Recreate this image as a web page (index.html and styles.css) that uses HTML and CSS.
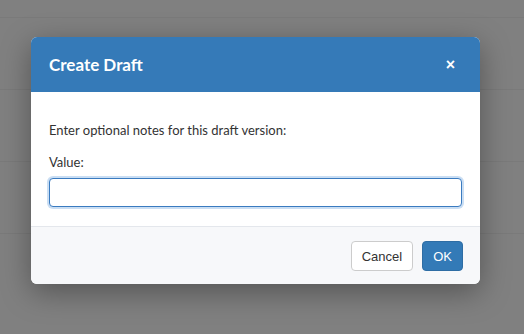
FILE: index.html
```html
<!DOCTYPE html>
<html lang="en">

<head>
    <meta charset="UTF-8">
    <meta name="viewport" content="width=device-width, initial-scale=1.0">
    <title>Create Draft</title>
    <link rel="stylesheet" href="styles.css">
</head>

<body>

    <!-- Page rows dimmed behind the overlay -->
    <div class="backdrop">
        <div class="row"></div>
        <div class="row"></div>
        <div class="row"></div>
        <div class="row"></div>
    </div>

    <!-- Create Draft dialog -->
    <div class="modal">
        <div class="modal-header">
            <h2>Create Draft</h2>
            <button class="close" type="button">&times;</button>
        </div>
        <div class="modal-body">
            <p>Enter optional notes for this draft version:</p>
            <label for="value">Value:</label>
            <input type="text" id="value" name="value">
        </div>
        <div class="modal-footer">
            <button class="btn btn-default" type="button">Cancel</button>
            <button class="btn btn-primary" type="button">OK</button>
        </div>
    </div>

</body>

</html>
```

FILE: styles.css
```css
/* General Styles */
html,
body {
    height: 100%;
    margin: 0;
    overflow: hidden;
}

body {
    position: relative;
    background-color: #808080;
    font-family: Lato, "Open Sans", sans-serif;
}

.backdrop {
    position: absolute;
    inset: 0;
    padding-top: 17px;
}

.row {
    height: 71px;
    border-top: 1px solid #7a7a7a;
}

.modal {
    position: absolute;
    top: 37px;
    left: 31px;
    width: 449px;
    background: #ffffff;
    border-radius: 6px;
    overflow: hidden;
    box-shadow: 0 8px 30px rgba(0, 0, 0, 0.35);
}

.modal-header {
    height: 55px;
    padding: 0 25px 0 18px;
    display: flex;
    justify-content: space-between;
    align-items: center;
    background-color: #357ab8;
}

h2 {
    margin: 0;
    font-size: 17px;
    font-weight: 700;
    color: #ffffff;
}

.close {
    padding: 0;
    border: none;
    background: none;
    color: #ffffff;
    font-family: "Liberation Sans", Arial, sans-serif;
    font-size: 16px;
    font-weight: 700;
    line-height: 1;
    cursor: pointer;
}

.modal-body {
    padding: 29px 18px 19px;
}

p {
    margin: 0 0 14px;
    font-size: 13px;
    line-height: 18px;
    color: #333;
}

label {
    display: block;
    margin-bottom: 7px;
    font-size: 13px;
    line-height: 18px;
    color: #333;
}

input {
    display: block;
    box-sizing: border-box;
    width: 100%;
    height: 29px;
    padding: 4px 8px;
    font-size: 13px;
    border: 1px solid #3a7bc0;
    border-radius: 4px;
    outline: none;
    box-shadow: 0 0 0 2px rgba(102, 160, 220, 0.35);
}

.modal-footer {
    display: flex;
    justify-content: flex-end;
    gap: 9px;
    padding: 14px 17px 13px;
    border-top: 1px solid #e4e7ec;
    background-color: #f7f8fa;
}

.btn {
    box-sizing: border-box;
    height: 30px;
    padding: 0 10px;
    font-family: "Liberation Sans", Arial, sans-serif;
    font-size: 13px;
    border-radius: 4px;
    cursor: pointer;
}

.btn-default {
    background-color: #ffffff;
    color: #333;
    border: 1px solid #cccccc;
}

.btn-primary {
    background-color: #337ab7;
    color: #ffffff;
    border: 1px solid #2e6da4;
}
```
